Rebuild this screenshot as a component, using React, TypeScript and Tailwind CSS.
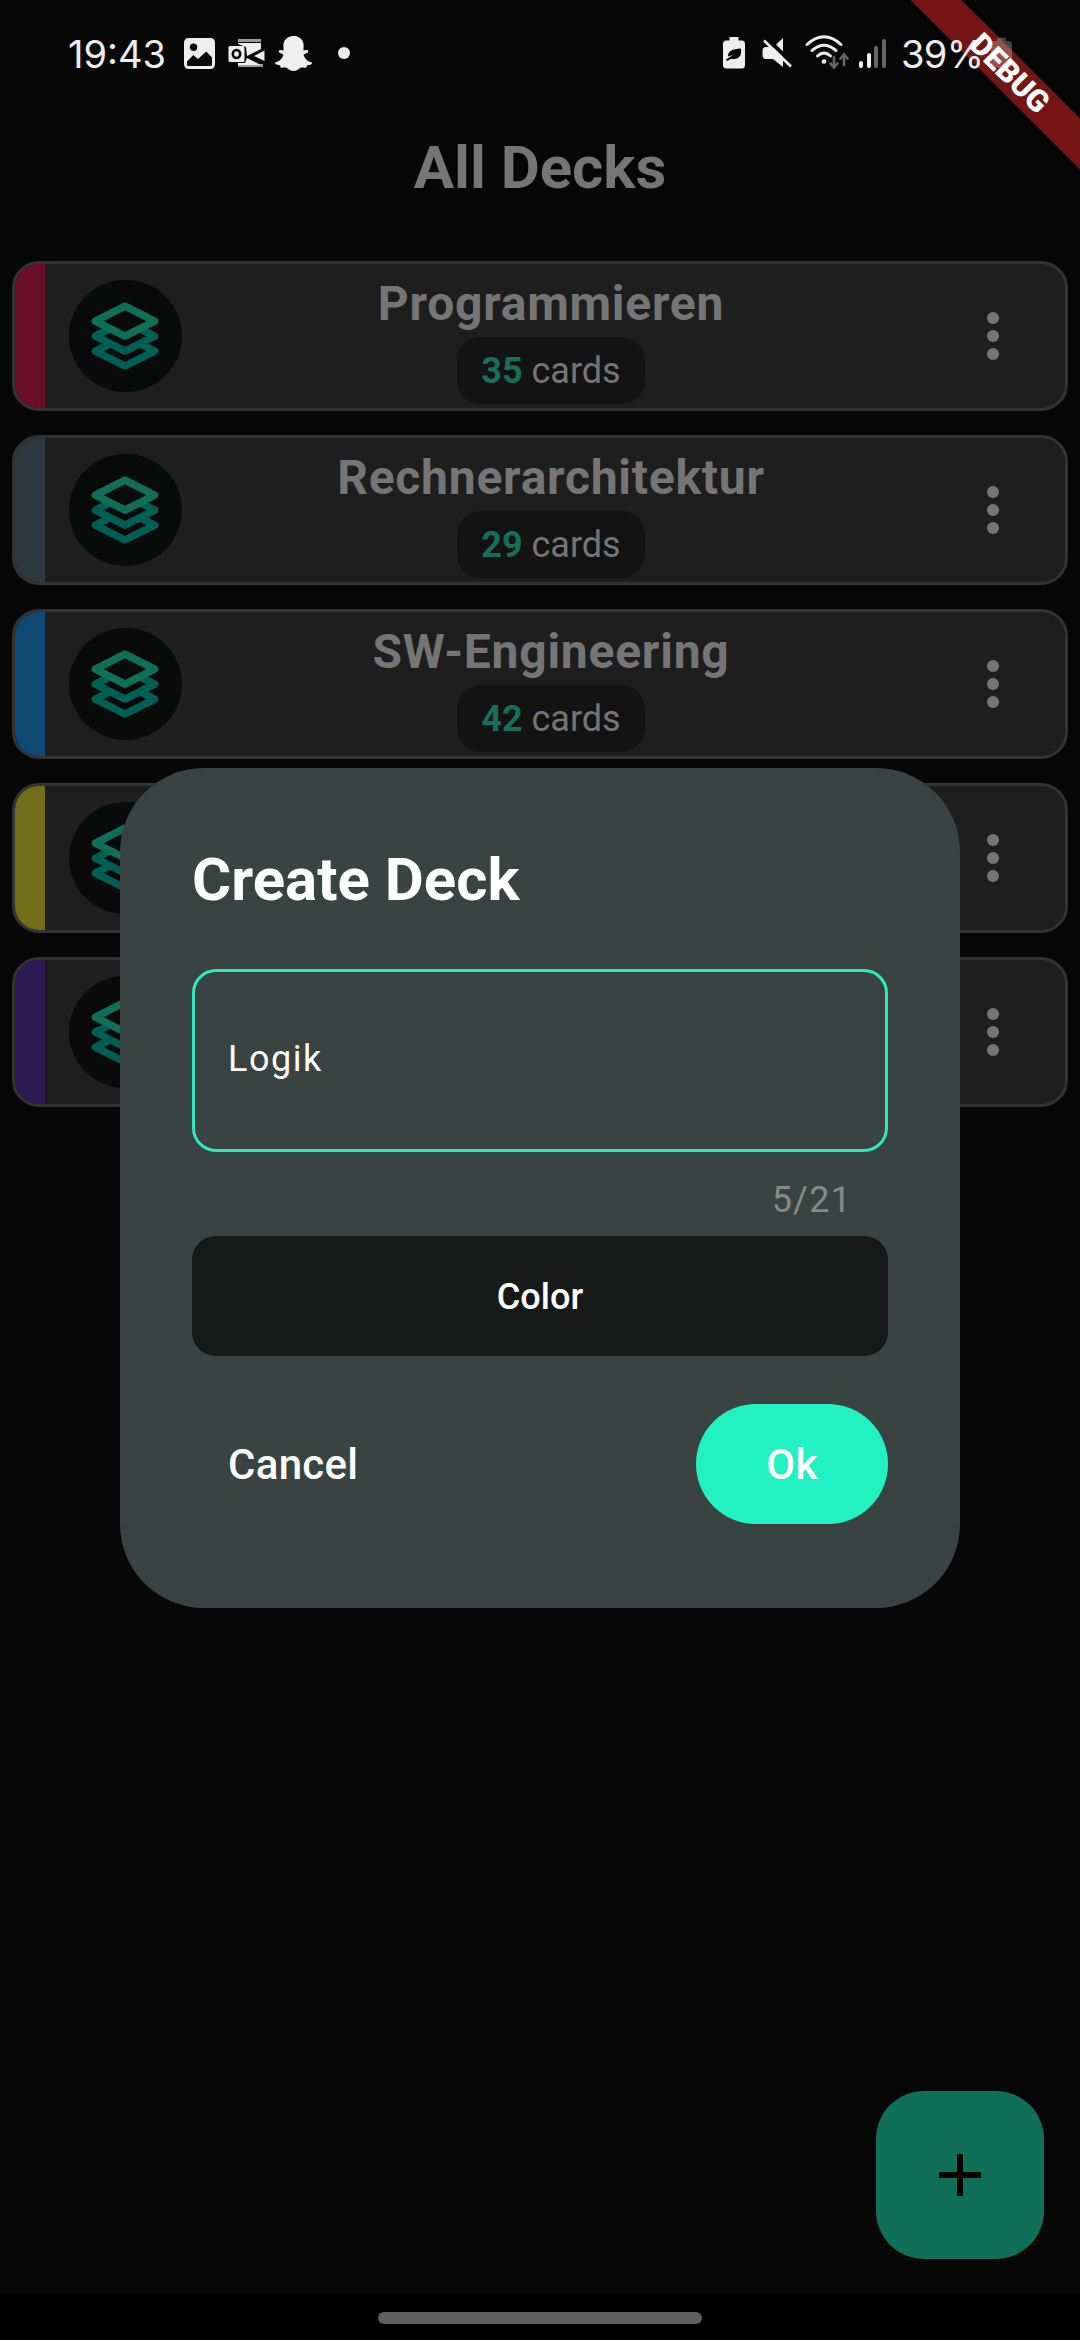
import { FaSnapchatGhost } from "react-icons/fa";

const decks = [
  { name: "Programmieren", cards: 35, strip: "bg-[#6b0e2b]" },
  { name: "Rechnerarchitektur", cards: 29, strip: "bg-[#2d3940]" },
  { name: "SW-Engineering", cards: 42, strip: "bg-[#0f4873]" },
  { strip: "bg-[#756c1b]" },
  { strip: "bg-[#2e1a52]" },
];

function LayersIcon() {
  return (
    <svg viewBox="0 0 68 68" className="h-[68px] w-[68px]" fill="none" strokeWidth="7.5" strokeLinejoin="round">
      <path d="M34 34.2 63.6 49.2 34 64 4.4 49.2Z" stroke="#005f55" />
      <path d="M34 19.2 63.6 34.2 34 49.2 4.4 34.2Z" fill="#090a0a" stroke="#005f55" />
      <path d="M34 4.2 63.6 19.2 34 34.2 4.4 19.2Z" fill="#090a0a" stroke="#106f58" />
    </svg>
  );
}

function DeckCard({ name, cards, strip }: { name?: string; cards?: number; strip: string }) {
  return (
    <li className="flex h-[150px] overflow-hidden rounded-[27px] border-[3px] border-[#333333] bg-[#1e1e1e]">
      <div className={`w-[30px] shrink-0 ${strip}`} />
      <div className="ml-6 flex h-[112.5px] w-[112.5px] shrink-0 items-center justify-center self-center rounded-full bg-[#090a0a]">
        <LayersIcon />
      </div>
      <div className="flex flex-1 flex-col items-center pt-3">
        {name && (
          <>
            <h2 className="text-[48px] leading-[56px] font-bold tracking-[0.75px] whitespace-nowrap text-[#757575]">{name}</h2>
            <div className="mt-[5px] flex h-[67px] items-center rounded-[24px] bg-[#131313] px-6 text-[36px] leading-[42px] whitespace-pre text-[#757575]">
              <span className="font-bold text-[#156f59]">{cards}</span> cards
            </div>
          </>
        )}
      </div>
      <div className="flex w-[144.5px] shrink-0 flex-col items-center justify-center gap-1.5">
        <i className="h-3 w-3 rounded-full bg-[#757575]" />
        <i className="h-3 w-3 rounded-full bg-[#757575]" />
        <i className="h-3 w-3 rounded-full bg-[#757575]" />
      </div>
    </li>
  );
}

function StatusBar() {
  return (
    <div className="relative z-10 flex h-[108px] items-start pl-[67px] font-['Inter',sans-serif] text-[38px] leading-[46px] text-[#eeeeee]">
      <span className="mt-[31px] w-[117px] shrink-0 pl-px whitespace-nowrap">19:43</span>
      <svg viewBox="0 0 31 31" className="mt-[38px] h-[31px] w-[31px] shrink-0">
        <path
          fill="#eeeeee"
          fillRule="evenodd"
          d="M5 0H26Q31 0 31 5V26Q31 31 26 31H5Q0 31 0 26V5Q0 0 5 0ZM9.5 5.6A3.7 3.7 0 1 0 9.5 13A3.7 3.7 0 1 0 9.5 5.6ZM3 23.5V27Q3.3 28 4.5 28H26.5Q28 28 28 26.5V19.5L22.3 13.5 14 21 9.3 17Z"
        />
      </svg>
      <svg viewBox="0 0 37 29" className="mt-[39px] ml-[13px] h-[29px] w-[37px] shrink-0">
        <path fill="#9a9a9a" d="M10 0H33V3H10ZM10 25H35V28H10Z" />
        <path fill="#eeeeee" d="M10 4H33V10L19 17 18 8 10 5ZM36.5 11.500V22L26 17ZM19 19 33 26H10V24H17Z" />
        <rect x="0.500" y="7" width="16" height="16" rx="1.500" fill="#eeeeee" />
        <ellipse cx="8.500" cy="15" rx="3.700" ry="4" fill="none" stroke="#080808" strokeWidth="2.600" />
      </svg>
      <FaSnapchatGhost className="mt-[35px] ml-[10px] h-[37px] w-[37px] shrink-0" />
      <i className="mt-[47px] ml-[26px] h-3 w-3 shrink-0 rounded-full bg-[#eeeeee]" />

      <svg viewBox="0 0 22 32" className="mt-[37px] ml-[373px] h-[32px] w-[22px] shrink-0">
        <path fill="#eeeeee" d="M6.500 0H15.500V3.500H19Q22 3.500 22 7V28Q22 31.500 18.500 31.500H3.500Q0 31.500 0 28V7Q0 3.500 3 3.500H6.500Z" />
        <path fill="#080808" d="M18 11.500Q19.500 22 11 22H8Q6 23 4 24L3 22.500 10 18 5 19.500Q4.500 12 18 11.500Z" />
      </svg>
      <svg viewBox="0 0 30 30" className="mt-[38px] ml-[17px] h-[30px] w-[30px] shrink-0">
        <path fill="#eeeeee" d="M11.500 9 21 0V29L11 21H4Q0.500 21 0.500 17V13Q0.500 9 4 9Z" />
        <path stroke="#080808" strokeWidth="4" d="M4.500 0 30 25" />
        <path stroke="#eeeeee" strokeWidth="2.600" d="M2 2.500 29 28.500" />
      </svg>
      <svg viewBox="0 0 44 34" className="mt-[35px] ml-[13px] h-[34px] w-[44px] shrink-0" fill="none" strokeLinecap="round">
        <g stroke="#eeeeee" strokeWidth="3">
          <path d="M2 9.500Q19 -6 36 9.500" />
          <path d="M7 15.500Q19 5 31 15.500" />
          <path d="M12.500 21Q19 15 25.500 21" />
        </g>
        <circle cx="19" cy="26.500" r="2.300" fill="#eeeeee" />
        <path stroke="#666666" strokeWidth="2.600" d="M29 22V32M25.500 28.500 29 32.500 32.500 28.500M39 30V20M35.500 23.500 39 19.500 42.500 23.500" />
      </svg>
      <div className="mt-[38px] ml-[10px] flex h-[30px] w-[27px] shrink-0 items-end justify-between">
        <i className="h-[7px] w-[4px] rounded-full bg-[#eeeeee]" />
        <i className="h-[15px] w-[4px] rounded-full bg-[#eeeeee]" />
        <i className="h-[22px] w-[4px] rounded-full bg-[#666666]" />
        <i className="h-[29px] w-[4px] rounded-full bg-[#666666]" />
      </div>
      <span className="mt-[31px] ml-[15px] w-[90px] shrink-0 tracking-[-0.7px] whitespace-nowrap">39%</span>
      <svg viewBox="0 0 22 32" className="mt-[37px] h-[32px] w-[21px] shrink-0 opacity-25">
        <path fill="#ffffff" d="M6.500 0H15.500V3.500H19Q22 3.500 22 7V28Q22 31.500 18.500 31.500H3.500Q0 31.500 0 28V7Q0 3.500 3 3.500H6.500Z" />
      </svg>
    </div>
  );
}

function DebugBanner() {
  return (
    <>
      <div className="absolute top-0 right-0 h-[180px] w-[180px] overflow-hidden">
        <div className="absolute top-[54px] left-[-42px] h-[36px] w-[300px] rotate-45 bg-[#741515]" />
      </div>
      <div className="absolute top-0 right-0 z-20 h-[180px] w-[180px] overflow-hidden">
        <div className="absolute top-[54px] left-[-42px] flex h-[36px] w-[300px] rotate-45 items-center justify-center pl-1 text-[30.6px] leading-none font-black text-white">
          DEBUG
        </div>
      </div>
    </>
  );
}

function CreateDeckDialog() {
  return (
    <section className="absolute top-[768px] left-[120px] flex h-[840px] w-[840px] flex-col rounded-[84px] bg-[#394442] p-[72px] text-white">
      <h2 className="text-[60px] leading-[80px] font-bold">Create Deck</h2>
      <div className="mt-[49px] flex h-[183px] items-center rounded-[24px] border-[3px] border-[#2ee9c0] px-[33px] pb-1 text-[36px] leading-[42px] tracking-[1.5px]">
        Logik
      </div>
      <div className="mt-[27px] h-[42px] pr-9 text-right text-[36px] leading-[42px] tracking-[1.2px] text-[#838a89]">5/21</div>
      <button className="mt-[15px] h-[120px] rounded-[24px] bg-[#171918] pt-0.5 text-[36px] font-medium">Color</button>
      <div className="mt-12 flex h-[120px] items-center justify-between">
        <button className="pl-9 text-[42px] font-medium tracking-[0.3px]">Cancel</button>
        <button className="h-[120px] w-[192px] rounded-full bg-[#22f2c3] text-[42px] font-medium tracking-[0.3px]">Ok</button>
      </div>
    </section>
  );
}

export default function App() {
  return (
    <main className="relative flex h-[2340px] w-[1080px] flex-col overflow-hidden bg-[#070707] font-['Roboto',sans-serif]">
      <StatusBar />
      <h1 className="h-[119px] text-center text-[60px] leading-[119px] font-bold text-[#757575]">All Decks</h1>
      <ul className="mt-[34px] flex flex-col gap-6 px-3">
        {decks.map((deck) => (
          <DeckCard key={deck.strip} {...deck} />
        ))}
      </ul>
      <button className="mt-auto mr-9 mb-9 flex h-[168px] w-[168px] items-center justify-center self-end rounded-[48px] bg-[#106f58]" aria-label="Add deck">
        <svg viewBox="0 0 42 42" className="h-[42px] w-[42px]">
          <path d="M21 0V42M0 21H42" stroke="#000000" strokeWidth="6" />
        </svg>
      </button>
      <div className="flex h-[45px] items-center justify-center bg-black">
        <div className="h-[12px] w-[324px] rounded-full bg-[#5f5f5f]" />
      </div>
      <CreateDeckDialog />
      <DebugBanner />
    </main>
  );
}
